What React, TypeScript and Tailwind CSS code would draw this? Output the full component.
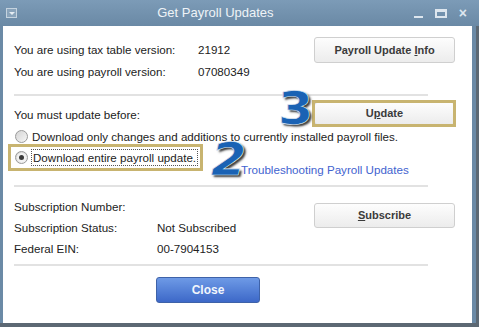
import React from "react";

function Radio({ checked }: { checked?: boolean }) {
  return (
    <span className="flex h-[13px] w-[13px] shrink-0 items-center justify-center rounded-full border border-[#9a9a9a] bg-gradient-to-br from-[#d4d4d4] to-[#f6f6f6]">
      {checked ? <span className="h-[5px] w-[5px] rounded-full bg-[#3a3a3a] ring-2 ring-[#f2f2f2]" /> : null}
    </span>
  );
}

function GrayButton({ children, className }: { children: React.ReactNode; className?: string }) {
  return (
    <button
      type="button"
      className={
        "flex w-[141px] items-center justify-center rounded-[3px] border border-[#cfcfcf] bg-gradient-to-b from-[#fdfdfd] to-[#ececec] text-[11px] font-bold text-[#3b3b3b] " +
        (className ?? "")
      }
    >
      {children}
    </button>
  );
}

function Separator() {
  return <div className="h-[2px] w-[414px] bg-[#e2e2e2]" />;
}

export default function App() {
  return (
    <div className="relative h-[327px] w-[479px] overflow-hidden bg-[#6b8aa6] font-['Liberation_Sans',Arial,sans-serif] text-[11.6px] text-[#222]">
      {/* title bar */}
      <div className="flex h-[26px] items-center bg-gradient-to-b from-[#7c9bb7] to-[#6a89a5] pl-[6px] pr-[12px]">
        <span className="flex h-[10px] w-[11px] items-center justify-center border border-[#c5d3df] bg-[#8aa4bb]">
          <span className="h-0 w-0 border-x-[3px] border-t-[3px] border-x-transparent border-t-[#e6edf3]" />
        </span>
        <span className="flex-1 text-center text-[13px] text-[#eef3f7]">Get Payroll Updates</span>
        <div className="flex items-center gap-[12px] text-[#dde6ee]">
          <span className="mt-[8px] h-[2px] w-[9px] bg-[#dde6ee]" />
          <span className="h-[9px] w-[12px] border-2 border-t-[3px] border-[#dde6ee]" />
          <span className="text-[14px] font-bold leading-none">×</span>
        </div>
      </div>

      {/* body */}
      <div className="ml-[3px] h-[297px] w-[469px] bg-white pl-[11px]">
        {/* versions */}
        <div className="flex h-[68px] items-start">
          <div className="w-[300px] pt-[13px]">
            <div className="flex h-[22px] items-center">
              <span className="w-[184px]">You are using tax table version:</span>
              <span>21912</span>
            </div>
            <div className="flex h-[22px] items-center">
              <span className="w-[184px]">You are using payroll version:</span>
              <span>07080349</span>
            </div>
          </div>
          <GrayButton className="mt-[11px] h-[26px]">
            <span>
              Payroll Update <span className="underline">I</span>nfo
            </span>
          </GrayButton>
        </div>
        <Separator />

        {/* update */}
        <div className="flex h-[30px] items-start">
          <div className="mt-[8px] flex h-[22px] w-[300px] items-center">You must update before:</div>
          <GrayButton className="mt-[6px] h-[23px]">
            <span>
              U<span className="underline">p</span>date
            </span>
          </GrayButton>
        </div>
        <div className="flex h-[21px] items-center gap-[4px] pl-[1px]">
          <Radio />
          <span>Download only changes and additions to currently installed payroll files.</span>
        </div>
        <div className="flex h-[32px] items-start">
          <div className="flex h-[21px] w-[227px] items-center gap-[3px] pl-[1px]">
            <Radio checked />
            <span className="whitespace-nowrap border border-dotted border-[#555] px-[1px] leading-[15px]">
              Download entire payroll update.
            </span>
          </div>
          <span className="mt-[16px] whitespace-nowrap leading-[14px] text-[#3f63cf]">Troubleshooting Payroll Updates</span>
        </div>
        <div className="mt-[6px]">
          <Separator />
        </div>

        {/* subscription */}
        <div className="flex h-[77px] items-start">
          <div className="w-[300px] pt-[9px]">
            <div className="flex h-[21px] items-center">
              <span className="w-[143px]">Subscription Number:</span>
            </div>
            <div className="flex h-[21px] items-center">
              <span className="w-[143px]">Subscription Status:</span>
              <span>Not Subscribed</span>
            </div>
            <div className="flex h-[21px] items-center">
              <span className="w-[143px]">Federal EIN:</span>
              <span>00-7904153</span>
            </div>
          </div>
          <GrayButton className="mt-[16px] h-[25px]">
            <span>
              <span className="underline">S</span>ubscribe
            </span>
          </GrayButton>
        </div>
        <Separator />
        <button
          type="button"
          className="ml-[142px] mt-[11px] flex h-[26px] w-[104px] items-center justify-center rounded-[3px] border border-[#3e62a8] bg-gradient-to-b from-[#6e9ae6] to-[#3d68c8] text-[12px] font-bold text-[#f2f6fc]"
        >
          Close
        </button>
      </div>

      {/* bottom frame shading */}
      <div className="absolute bottom-0 left-0 h-[4px] w-full bg-[#5c6873]" />
      <div className="absolute right-0 top-[26px] h-[301px] w-[3px] bg-[#5c6873]" />

      {/* annotations */}
      <div className="pointer-events-none absolute left-[8px] top-[144px] h-[27px] w-[195px] border-[3px] border-[#c8b470]" />
      <div className="pointer-events-none absolute left-[312px] top-[100px] h-[27px] w-[144px] border-[3px] border-[#c8b470]" />
      <span className="absolute left-[278px] top-[94px] origin-left scale-x-[1.15] font-['DejaVu_Sans',sans-serif] text-[44px] font-bold leading-[30px] text-[#1a62b4] [-webkit-text-stroke:0.6px_#dfeaf6] [text-shadow:2px_2px_2px_#3a3a3a]">
        3
      </span>
      <span className="absolute left-[211px] top-[145px] origin-left scale-x-[1.15] font-['DejaVu_Sans',sans-serif] text-[44px] font-bold italic leading-[30px] text-[#1a62b4] [-webkit-text-stroke:0.6px_#dfeaf6] [text-shadow:2px_2px_2px_#3a3a3a]">
        2
      </span>
    </div>
  );
}
